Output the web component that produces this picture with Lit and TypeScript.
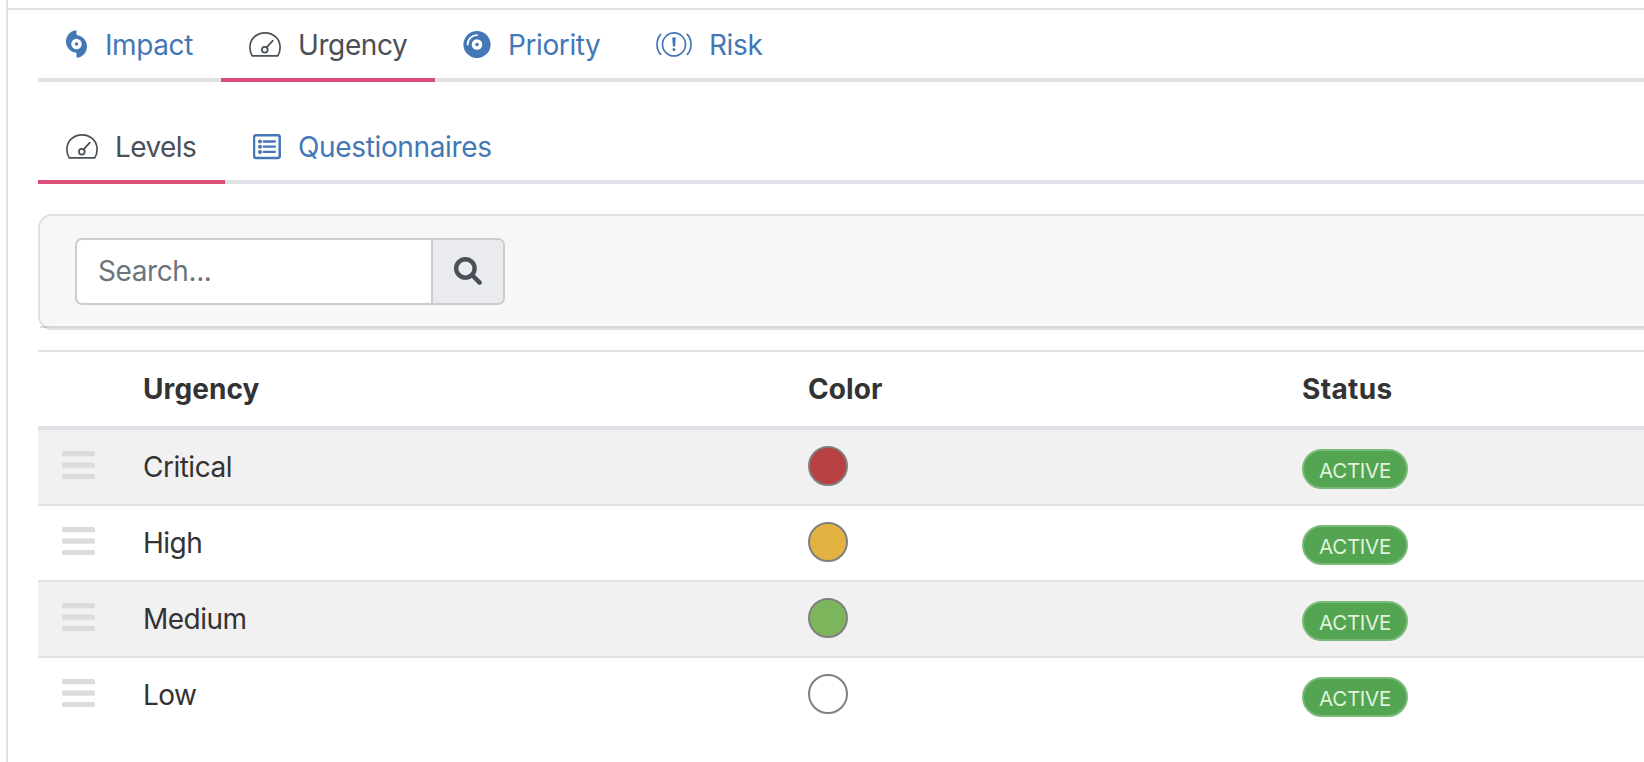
import { LitElement, html, css } from "lit";
import { customElement } from "lit/decorators.js";

const hurricane = html`<svg class="i" width="21" height="28" viewBox="0 0 384 512" fill="currentColor"><path d="M0 208C0 104.400 75.700 18.500 174.900 2.600C184 1.200 192 8.600 192 17.900V81.200c0 8.400 6.500 15.300 14.700 16.500C307 112.500 384 199 384 303.400c0 103.600-75.700 189.500-174.900 205.400c-9.200 1.500-17.100-5.900-17.100-15.200V430.200c0-8.400-6.500-15.300-14.700-16.500C77 398.900 0 312.400 0 208zm288 48A96 96 0 1 0 96 256a96 96 0 1 0 192 0zm-96-32a32 32 0 1 1 0 64 32 32 0 1 1 0-64z"/></svg>`;
const gauge = html`<svg class="i" width="32" height="28" viewBox="0 0 32 28" fill="none" stroke="currentColor" stroke-width="1.700" stroke-linecap="round" stroke-linejoin="round"><path d="M3.200 25.900C1.700 23.300.900 20.400.900 17.400C.9 9 7.600 2.800 16 2.800S31.100 9 31.100 17.400c0 3-.8 5.900-2.300 8.500Z"/><circle cx="15.800" cy="19.700" r="2.900"/><path d="M17.600 17.400L23.800 10.700"/></svg>`;
const disc = html`<svg class="i" width="28" height="28" viewBox="0 0 28 28"><circle cx="14" cy="14.500" r="13.600" fill="currentColor"/><path d="M4.600 14.500A9.400 9.400 0 0 1 14 5.100" fill="none" stroke="#fff" stroke-width="1.800" stroke-linecap="round"/><circle cx="14" cy="14.500" r="5.300" fill="#fff"/><circle cx="14" cy="14.500" r="1.800" fill="currentColor"/></svg>`;
const risk = html`<svg class="i" width="36" height="28" viewBox="0 0 36 28" fill="none" stroke="currentColor" stroke-width="1.700" stroke-linecap="round"><circle cx="18" cy="14.400" r="11.500"/><path d="M4.700 4.400C-.2 9.700-.2 19.100 4.700 24.400M31.300 4.400C36.200 9.700 36.200 19.100 31.300 24.400"/><path d="M16.200 7.400h3.600l-.7 9h-2.200z" fill="currentColor" stroke="none"/><circle cx="18" cy="19.600" r="1.500" fill="currentColor" stroke="none"/></svg>`;
const list = html`<svg class="i" width="28" height="28" viewBox="0 0 28 28" fill="none" stroke="currentColor"><rect x="1" y="3.300" width="25.700" height="22.700" rx="2" stroke-width="2.500"/><path d="M10.700 9.500h11.200M10.700 14.700h11.200M10.700 19.900h11.200" stroke-width="2.300" stroke-linecap="round"/><g fill="currentColor" stroke="none"><circle cx="7" cy="9.500" r="2"/><circle cx="7" cy="14.700" r="2"/><circle cx="7" cy="19.900" r="2"/></g></svg>`;

const rows = [
  { name: "Critical", color: "#b83f42" },
  { name: "High", color: "#e2b340" },
  { name: "Medium", color: "#7bb65d" },
  { name: "Low", color: "#ffffff" },
];

@customElement("app-root")
export class AppRoot extends LitElement {
  static styles = css`
    :host { display: block; height: 762px; overflow: hidden; background: #fff; color: #333; font: 28px/42px Inter, sans-serif; letter-spacing: -0.4px; }
    * { box-sizing: border-box; }
    .top { height: 10px; margin-left: 6px; border-left: 2px solid #dee2e6; border-bottom: 2px solid #dee2e6; }
    .panel { height: 752px; margin-left: 6px; padding-left: 30px; border-left: 2px solid #dee2e6; }
    .tabs { display: flex; height: 72px; border-bottom: 4px solid #dee2e6; color: #4377b5; white-space: nowrap; }
    .sub { margin-top: 30px; }
    .tab { display: flex; flex: none; padding: 14px 0 0 28px; margin-bottom: -4px; }
    .on { color: #495057; border-bottom: 4px solid #da4e78; }
    .i { display: block; flex: none; margin-top: 6px; margin-right: 17px; }
    .impact { width: 183px; } .urgency { width: 214px; } .priority { width: 193px; } .risk { width: 160px; }
    .impact .i { margin-right: 18px; }
    .levels { width: 187px; } .quest { width: 300px; }
    .levels { letter-spacing: -0.6px; } .quest { letter-spacing: -0.35px; }
    .card { display: flex; flex-direction: column; height: 116px; margin-top: 30px; border: 2px solid #dee2e6; border-right: 0; border-radius: 14px 0 0 14px; background: #f7f7f7; }
    .card-body { flex: 1; padding: 22px 0 0 35px; }
    .rule { height: 2px; background: rgba(0, 0, 0, 0.125); }
    .search { display: flex; width: 430px; height: 67px; border: 2px solid #ccc; border-radius: 7px; background: #fff; overflow: hidden; }
    .field { flex: 1; padding: 10px 0 0 21px; color: #6c757d; }
    .btn { width: 72px; border-left: 2px solid #ccc; background: #e9ebef; display: grid; place-items: center; color: #495057; }
    .btn svg { display: block; margin: -2px 1px 0 0; }
    .table { margin-top: 20px; border-top: 2px solid #dee2e6; }
    .row { display: grid; grid-template-columns: 105px 665px 494px 1fr; height: 76px; border-bottom: 2px solid #dee2e6; padding-top: 16px; }
    .row.head { height: 78px; border-bottom: 4px solid #dee2e6; font-weight: 700; letter-spacing: 0.1px; }
    .status { letter-spacing: 0.35px; }
    .row:nth-child(even) { background: #f1f1f1; }
    .row:last-child { border-bottom: 0; }
    .name { letter-spacing: -0.5px; }
    .grip { display: block; margin: 5px 0 0 24px; }
    .dot { width: 40px; height: 40px; border-radius: 50%; border: 2px solid #808080; }
    .badge { width: 106px; height: 40px; margin-top: 3px; border: 2px solid #7bba7b; border-radius: 20px; background: #53a551; color: #e0f3df; font-size: 20.5px; line-height: 39px; letter-spacing: -0.3px; text-align: center; }
  `;

  render() {
    return html`
      <div class="top"></div>
      <div class="panel">
        <nav class="tabs">
          <div class="tab impact">${hurricane}<span>Impact</span></div>
          <div class="tab urgency on">${gauge}<span>Urgency</span></div>
          <div class="tab priority">${disc}<span>Priority</span></div>
          <div class="tab risk">${risk}<span>Risk</span></div>
        </nav>
        <nav class="tabs sub">
          <div class="tab levels on">${gauge}<span>Levels</span></div>
          <div class="tab quest">${list}<span>Questionnaires</span></div>
        </nav>
        <div class="card">
          <div class="card-body">
            <div class="search">
              <div class="field"><span>Search...</span></div>
              <div class="btn"><svg width="28" height="28" viewBox="0 0 28 28" fill="none" stroke="currentColor"><circle cx="11.400" cy="11.400" r="9.200" stroke-width="4.400"/><path d="M18.500 18.500L25.600 25.600" stroke-width="4.400" stroke-linecap="round"/></svg></div>
            </div>
          </div>
          <div class="rule"></div>
        </div>
        <div class="table">
          <div class="row head"><span></span><span>Urgency</span><span>Color</span><span class="status">Status</span></div>
          ${rows.map((r) => html`<div class="row">
            <svg class="grip" width="33" height="28" viewBox="0 0 33 28" fill="#dcdcdc"><rect width="33" height="5.200" rx="1.500"/><rect y="11.500" width="33" height="5.200" rx="1.500"/><rect y="23" width="33" height="5" rx="1.500"/></svg>
            <span class="name">${r.name}</span>
            <div class="dot" style="background:${r.color}"></div>
            <div class="badge"><span>ACTIVE</span></div>
          </div>`)}
        </div>
      </div>`;
  }
}
